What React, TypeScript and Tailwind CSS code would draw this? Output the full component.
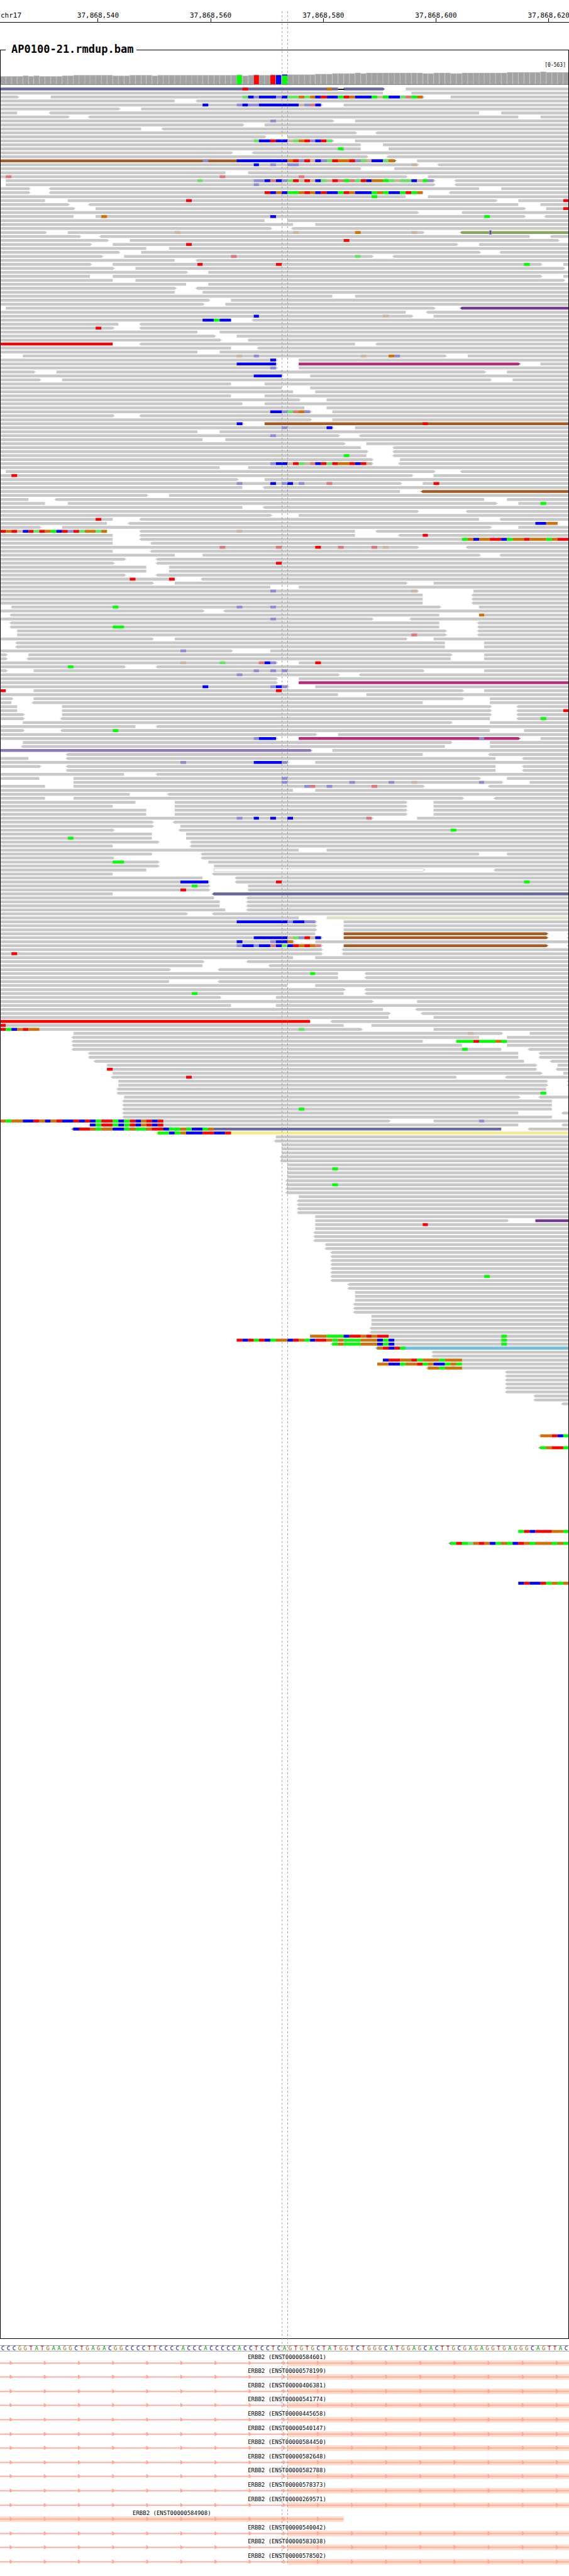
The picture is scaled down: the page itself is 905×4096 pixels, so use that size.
import React from "react";

/* ------------------------------------------------------------------ */
/* Geometry                                                            */
/* ------------------------------------------------------------------ */

const BASES = 101;
const ROW_PITCH = 7;
const READ_HEIGHT = 5;
const FIRST_ROW_Y = 154;

const colX = (col: number) => Math.round((col * 1000) / BASES);

/* ------------------------------------------------------------------ */
/* Palettes                                                            */
/* ------------------------------------------------------------------ */

/* Upper case: confident base call. Lower case: low quality base call. */
const BASE_FILL: Record<string, string> = {
  A: "#00ff00",
  C: "#0000ff",
  G: "#d17105",
  T: "#ff0000",
  a: "#63e563",
  c: "#8d8cda",
  g: "#cbb59d",
  t: "#e07676",
};

const READ_FILL: Record<string, string> = {
  N: "#c8c8c8",
  S: "#666a9c",
  B: "#a65b24",
  O: "#86a762",
  P: "#73398f",
  R: "#ff0000",
  M: "#b92b77",
  V: "#8c79bb",
  L: "#d9e5c0",
  Y: "#f2ec8b",
  K: "#70bde4",
};

/* ------------------------------------------------------------------ */
/* Alignment rows                                                      */
/*   a-b     gap between two reads; ">" or "<" marks a read direction  */
/*   n:ACgt  mismatching bases from column n                           */
/*   @n=K    fill of the n-th read of the row                          */
/*   xN      the row is repeated N times                               */
/*   N|      continue at row N                                         */
/* ------------------------------------------------------------------ */

const ALIGNMENTS = `
68>-72 @0=S 43:T 58:G 60:-
68-73
3>-9 75>-80 43:aCcCCCcCaaGaGCTCCATGCCCAgACCatAG
31-<35
57>-61 36:C 42:cCccCCCCCCCgctC
21>-25
3-<9 85-89
12>-<16 92-96
59>-63 48:c
43>-47
25-<29
63>-<67
47>-51
59>-63 45:aCCTCCgaGTcCTa
64-68
64-69 60:A
41>-<45
65>-<69
70>-74 @0=B 36:c 42:CCCCCCCCCGTcTgCcaTGGTcagCCaG
74>-<78 45:C 48:c 51:cc 73:g
64-70
40-44
72>-76 1:t 39:t 53:t
0-1 77>-<81 35:a 45:ccCtCcaTgTgCagTtAtaTCGGAagaaCgAc
0-1 77>-<81 45:c
5>-<9 85-89
5>-<9 75-<80 47:TCGCAAGTGCTCCATGCCCAGACCATAG
72-76 66:A
8-12 88>-92 33:T 100:T
12>-<16 92-96
13>-17 93>-97 100:T
74>-82
13-17 93>-<97 18:G 48:C 86:A
47-51
52-56
48>-<52
8>-12 75>-<82 @2=O 31:g 52:g 63:G 73:g 87:i
14>-<18 94-<98
19>-23 99>-101 61:T
16>-20 81>-85 33:T
26-30
21>-25 85>-<89
18>-22 66>-<70 41:t 63:a
31-<35
16>-20 96>-100 35:T 49:T 93:A
20>-24 100>-101
33>-37
16-20 96>-100
20-24 100>-101
33-37
31>-<35
31-36
59-63
37>-41
36>-40
0-1 77>-<82 @1=P
72-<76
73>-77 45:C 68:g
41-<45 36:CCACC
21-<25
20>-<25 17:T
35-39
38>-42
39>-44
20-<25 63-<67 @0=R
41-<46
35-39
0>-4 79>-83 42:g 45:c 64:g 69:Gc
49>-53 48:C
49>-53 92>-96 @1=M 42:CCCCCCC
49>-53 48:c
6>-10 86>-90
50>-55 45:CCCCC
7>-11 87>-91
41-47
50-55
52-56
41-47
53>-58
43-47
54-58
55>-59 48:CCcatGc
20>-<25
55>-59
43>-47 @1=B 42:C 75:T
59>-63 50:c 58:C
35-39
60>-<64 48:c
36-40
61>-65
64-<70
65>-<70
65-<70 61:A
66>-71
66>-<71 48:cCCgTagtCTaTGGTCTg
39-44
0-1 77>-<82
73>-77 2:T
42>-47
71>-75 42:c 48:C 50:cC 53:c 58:t 77:T
43-<47
71-<75 @1=B
26>-30
5-<10 86-90
8-12 88>-92 96:A
43-<47
74>-<83
48>-53
20-<25 85-<89 17:T
19-<23 99-101 95:CCGG
7>-11 87>-92
19-<25 63-<67 0:TGTgCTaTGACTcTaGGaG 42:g
20-<25 63-<71 75:T
20-<25 82:AGCGGTTCAGGTGGGAGTT
20-<27
74>-<83 39:t 49:t 56:T 60:t 66:t 68:g
20-<27
31-36 85>-<89
22>-<28
20>-<28 49:T
26-30 x2
22>-<28
31-<36 23:T 30:T
27>-31 72>-77
48-53
74>-84 48:c 73:g
75-<84 x3
0-2 78>-85 20:A 42:c 48:c
36>-<40
0-<2 78-85 85:G
66>-<73 48:c
0-<2 78-<85
0-<2 78-<85 20:AA
0-3 79>-<85
0-3 79>-<85 73:t
27>-31 72>-77
0-<3 79-86 x2
41>-48 32:c
1>-5 80>-86
1>-<5 80-86
49>-53 32:g 39:a 46:tCc 56:T
22>-<28 12:A
1>-6 75>-86 45:c 48:c 50:c
60>-<64 42:c
49>-53
49>-53 @1=M
51>-56 36:C 48:cCc
1-6 82>-86 0:T 49:T
60-65
2>-6 82>-87
2-<6 75-87
3-11 87>-<92
3-11 87>-<92 100:T
4>-11 87>-<92
4>-<11 87-<92 96:A
0-4 80>-87
24-<28
4>-<11 87-93 20:A
56>-60
49>-53 92>-96 @1=M 45:cCCC 85:c
0-4 80>-87
0-<4 79-87
55>-59 @0=V
0-<12 75-<87
5-<12 88-<93
51>-56 32:c 45:CCCCCc
7>-<12 88-<93
0-<12 88-<93
22-<28
7-13 85>-90 50:c
0-13 89>-94 50:c 62:c 69:c 73:g 85:c
8-13 75>-<87 54:ct 58:c 66:t
52-56
23-<30
8-13 82>-<88
24-31 72>-77
20-31 72>-77
26-31 72>-77 x2
66>-74 42:c 45:C 48:C 51:C 65:t
27>-<31
27>-32
20>-<32 80:A
27-33
27-33 12:A
28>-<34
20-<34
53-58
27-<36 85-90
20>-<36
28>-37 20:AA
28>-38
26-38 75>-<88 @1=W
20-<38
36-<42
37>-<42 32:CCCCC 49:T 93:A
37>-44 34:A
37>-44 32:T
20-<38 @1=S
38-<44
39-<44 x2
40-<44
33>-<38
53-58 @1=L
56>-61 42:CCCCCCCCCcCCcc
56>-61 x2
56-61 97>-<101 @1=B
57>-61 97>-<101 @1=B 45:CCCCCCgacTgC
52>-56 42:C 48:cCCG
57>-61 97>-<101 @1=B 42:cCCcCCtCaCTGTGt
57>-<61
57>-<61 2:T
52-56
36>-<44
36-<48
30>-<39
60-<65 55:A
60-<65
30-<39
51-56
61>-<65
61-<65 34:A
39>-49
66>-74
41-49
68-<74
69>-<75
69-77
55-<59 @0=R
61-66 0:T
64>-77 0:TACGTGG 53:a
0-13 89>-94 83:g
0-<13 85-90
0-<13 75-81 81:AAATAAAGA
0-<13 82-90
0-<13 89-<94 82:A
0-<16 92-<96 x2
0-<17 93-<98
0-19 95>-99
0-19 95>-<99 19:T
0-20 96>-100
0-<20 81-<90 33:T
0-21 97>-<101 x2
0-<21 97-101
0-<21 97-101 96:A
0-22 92>-<96
0-<22 98-101 x2
0-<22 98-101 53:A
0-<22 92-<100
0-<22 98-101
69>-77 0:GAGGCCTGCGTCCTCTCATTACATCGTCT 85:c
0-<16 92-<100 16:CATTACATCGTCT
0-<13 89-<94 @0=S 13:CTTGAGGCCAGAAGTTCAAGACCAG
0-<28 @0=Y 28:AACAGCCCTTCCT
0-49
0-<49
0-50 x3
0-<50 x2
0-51
0-51 59:A
0-51 x2
0-<51
0-<51 59:A
0-<51 x2
0-53
0-<53 x4
0-56
0-56 90>-95 @1=P
0-56 75:T
0-56
0-<56 x3
0-<58 x2
0-<59 x6
0-<59 86:A
0-<59
0-<62 x2
0-63 x3
0-<63 x3
0-66 x3
0-<66 x2
0-55 55:GGGAAACTTGTGTT 89:A
0-42 42:TCTATCAGGCTGACTTGAGAAAGGGCAC 89:A
0-<59 59:AGAAAGGGCAC 89:A
0-<67 @0=K 67:GTCTA
0-<77 x2
0-68 68:CTTGGTAGGGAGGG
0-67 67:GGCCAGGTAGCCAGA
0-<76 76:GGAGGG
0-<90 x6
0-<95 x2
0-<100
338| 0-<96 96:GGTCA
341| 0-<96 @0=O 96:AGTTA
362| 0-92 92:ATCTTTGGA
365| 0-<80 @0=V 80:ATAaGTGCAGACTGAGGGAGA
375| 0-92 92:CTCCTAGAG
`;

type Read = { start: number; end: number; left: boolean; right: boolean; fill: string };
type Run = { col: number; length: number; base: string };
type Row = { y: number; reads: Read[]; runs: Run[] };

function parseRows(source: string): Row[] {
  const rows: Row[] = [];
  let index = 0;

  for (const line of source.trim().split("\n")) {
    const reads: Read[] = [];
    const runs: Run[] = [];
    const fills: Record<number, string> = {};
    let repeat = 1;
    let start = 0;
    let left = false;

    const close = (end: number, right: boolean) => {
      if (end > start || left || right) reads.push({ start, end, left, right, fill: "N" });
    };

    for (const token of line.trim().split(/\s+/)) {
      let match: RegExpMatchArray | null;
      if ((match = token.match(/^(\d+)\|$/))) {
        index = Number(match[1]);
      } else if ((match = token.match(/^x(\d+)$/))) {
        repeat = Number(match[1]);
      } else if ((match = token.match(/^@(\d+)=(\w)$/))) {
        fills[Number(match[1])] = match[2];
      } else if ((match = token.match(/^(\d+)(>?)-(<?)(\d+)$/))) {
        close(Number(match[1]), match[2] === ">");
        start = Number(match[4]);
        left = match[3] === "<";
      } else if ((match = token.match(/^(\d+):(\S+)$/))) {
        let col = Number(match[1]);
        for (const group of match[2].match(/(.)\1*/g) ?? []) {
          runs.push({ col, length: group.length, base: group[0] });
          col += group.length;
        }
      }
    }
    close(BASES, false);
    reads.forEach((read, i) => {
      read.fill = fills[i] ?? "N";
    });

    for (let i = 0; i < repeat; i++) {
      rows.push({ y: FIRST_ROW_Y + ROW_PITCH * index, reads, runs });
      index += 1;
    }
  }
  return rows;
}

const ROWS = parseRows(ALIGNMENTS);

function readPath({ start, end, left, right }: Read, y: number) {
  const x1 = colX(start);
  const x2 = colX(end);
  const head = right
    ? `L${x2 + 2} ${y + 1}v1h2v1h-2v1L${x2} ${y + READ_HEIGHT}`
    : `V${y + READ_HEIGHT}`;
  const tail = left ? `H${x1}L${x1 - 2} ${y + 4}v-1h-2v-1h2v-1Z` : `H${x1}Z`;
  return `M${x1} ${y}H${x2}${head}${tail}`;
}

function BaseRun({ run, y }: { run: Run; y: number }) {
  const x = colX(run.col);
  const width = colX(run.col + run.length) - x;
  if (run.base === "-") {
    return (
      <>
        <rect x={x} y={y} width={width} height={READ_HEIGHT} fill="#fff" />
        <rect x={x} y={y + 2} width={width + 1} height={2} fill="#000" />
      </>
    );
  }
  if (run.base === "i") {
    return <path d={`M${x - 1} ${y - 1}h4v1h-1v5h1v1h-4v-1h1v-5h-1z`} fill="#7a1ee0" />;
  }
  return <rect x={x} y={y} width={width} height={READ_HEIGHT} fill={BASE_FILL[run.base]} />;
}

/* ------------------------------------------------------------------ */
/* Coverage histogram: [number of columns, top edge]                   */
/* ------------------------------------------------------------------ */

const COVERAGE_FLOOR = 148;

const COVERAGE: [number, number][] = [
  [4, 134], [1, 133], [1, 134], [1, 133], [4, 134], [2, 133], [7, 132], [3, 133],
  [4, 132], [1, 133], [15, 132], [1, 133], [6, 132], [6, 131], [3, 130], [4, 129],
  [1, 128], [1, 129], [10, 128], [2, 129], [3, 128], [2, 129], [8, 128], [6, 127],
  [1, 126], [4, 127],
];

const VARIANTS: { col: number; top: number; fill: string; minor: string }[] = [
  { col: 42, top: 132, fill: "#00ff00", minor: "#d17105" },
  { col: 45, top: 132, fill: "#ff0000", minor: "#0000ff" },
  { col: 48, top: 132, fill: "#ff0000", minor: "#0000ff" },
  { col: 49, top: 132, fill: "#0000ff", minor: "#ff0000" },
];

function Coverage() {
  const tops = COVERAGE.flatMap(([count, top]) => Array<number>(count).fill(top));
  return (
    <g>
      {tops.map((top, col) => {
        const x = colX(col);
        const width = colX(col + 1) - x;
        return (
          <g key={col}>
            <rect x={x} y={top} width={width} height={COVERAGE_FLOOR - top} fill="#b0b0b0" />
            <rect x={x + 1} y={top + 1} width={width - 2} height={COVERAGE_FLOOR - top - 1} fill="#a2a2a2" />
          </g>
        );
      })}
      {VARIANTS.map(({ col, top, fill, minor }) => (
        <g key={col}>
          <rect x={colX(col)} y={top} width={9} height={COVERAGE_FLOOR - top} fill={fill} />
          <rect x={colX(col) + 4} y={top} width={1} height={1} fill={minor} />
        </g>
      ))}
      <rect x={colX(50) + 1} y={131} width={9} height={2} fill="#0000ff" />
      <rect x={colX(50) + 1} y={133} width={9} height={15} fill="#00ff00" />
      <rect x={0} y={COVERAGE_FLOOR} width={1000} height={1} fill="#707070" />
    </g>
  );
}

/* ------------------------------------------------------------------ */
/* Ruler                                                               */
/* ------------------------------------------------------------------ */

const RULER_MARKS = ["37,868,540", "37,868,560", "37,868,580", "37,868,600", "37,868,620"];

function Ruler() {
  return (
    <header className="flex overflow-hidden border-b border-black pt-[19px] text-[11px] leading-[12px]">
      <span className="w-[7.33%] shrink-0 whitespace-nowrap pl-px">chr17</span>
      {RULER_MARKS.map((mark) => (
        <div key={mark} className="flex w-[19.8%] shrink-0 flex-col items-center">
          <span>{mark}</span>
          <span className="-mt-[2px] h-[6px] w-px bg-black" />
        </div>
      ))}
    </header>
  );
}

/* ------------------------------------------------------------------ */
/* Alignment track                                                     */
/* ------------------------------------------------------------------ */

function AlignmentTrack() {
  return (
    <fieldset className="mt-[32px] min-w-0 border border-black">
      <legend className="ml-[8px] pb-[3px] pl-[9px] pr-[5px] text-[17px] font-bold leading-[20px]">
        AP0100-21.rmdup.bam
      </legend>
      <p className="pb-[6px] pr-1 pt-[9px] text-right text-[8px] leading-[8px]">[0-563]</p>
      <svg
        className="block h-[3604px] w-full"
        viewBox="1 126 998 3982"
        preserveAspectRatio="none"
        role="img"
        aria-label="Read alignments"
      >
        <Coverage />
        {ROWS.map((row) => (
          <g key={row.y}>
            {row.reads.map((read, i) =>
              read.fill === "W" ? (
                <path key={i} d={readPath(read, row.y)} fill="#fff" stroke="#c8c8c8" />
              ) : (
                <path key={i} d={readPath(read, row.y)} fill={READ_FILL[read.fill]} />
              ),
            )}
            {row.runs.map((run) => (
              <BaseRun key={run.col} run={run} y={row.y} />
            ))}
          </g>
        ))}
      </svg>
    </fieldset>
  );
}

/* ------------------------------------------------------------------ */
/* Reference sequence                                                  */
/* ------------------------------------------------------------------ */

const SEQUENCE =
  "CCCGGTATGAAGGCTGAGACGGCCCCTTCCCCACCCACCCCCACCTCCTC" +
  "AGTGTGCTATGGTCTGGGCATGGAGCACTTGCGAGAGGTGAGGGCAGTTAC";

const LETTER_COLOR: Record<string, string> = {
  A: "text-[#009600]",
  C: "text-[#000096]",
  G: "text-[#a5640f]",
  T: "text-[#b40000]",
};

function Sequence() {
  return (
    <div className="mt-[10px] grid grid-cols-[repeat(101,minmax(0,1fr))] border-y border-[#aaaaaa] text-center text-[9px] leading-[8px]">
      {[...SEQUENCE].map((letter, i) => (
        <span key={i} className={LETTER_COLOR[letter]}>
          {letter}
        </span>
      ))}
    </div>
  );
}

/* ------------------------------------------------------------------ */
/* Transcripts                                                         */
/* ------------------------------------------------------------------ */

const TRANSCRIPTS = [
  "ENST00000584601",
  "ENST00000578199",
  "ENST00000406381",
  "ENST00000541774",
  "ENST00000445658",
  "ENST00000540147",
  "ENST00000584450",
  "ENST00000582648",
  "ENST00000582788",
  "ENST00000578373",
  "ENST00000269571",
  "ENST00000584908",
  "ENST00000540042",
  "ENST00000583038",
  "ENST00000578502",
];

const SHORT_TRANSCRIPT = "ENST00000584908";

function Transcript({ id }: { id: string }) {
  const short = id === SHORT_TRANSCRIPT;
  const end = short ? colX(61) : 1000;
  const exonStart = short ? 0 : colX(51);
  const arrows = Array.from({ length: 17 }, (_, i) => 17 + i * 60).filter((x) => x < end);
  return (
    <li className="flex min-h-0 flex-col justify-end">
      <span className={short ? "w-[60.4%] text-center" : "w-full pl-2 text-center"}>ERBB2 ({id})</span>
      <svg className="block h-[9px] w-full" viewBox="0 0 1000 10" preserveAspectRatio="none" aria-hidden="true">
        <rect x={exonStart} y={0} width={end - exonStart} height={10} fill="#ffdccb" />
        <rect x={0} y={4} width={end} height={2} fill="#ffa696" />
        {arrows.map((x) => (
          <path key={x} d={`M${x} 1h1l2 2l1 1v2l-1 1l-2 1h-1z`} fill="#ffa696" />
        ))}
      </svg>
    </li>
  );
}

function Transcripts() {
  return (
    <ul className="grid h-[339px] auto-rows-fr text-[9px] leading-[10px]">
      {TRANSCRIPTS.map((id) => (
        <Transcript key={id} id={id} />
      ))}
    </ul>
  );
}

/* ------------------------------------------------------------------ */
/* Centre guides, drawn over every track                               */
/* ------------------------------------------------------------------ */

function CentreGuides() {
  return (
    <svg
      className="pointer-events-none absolute inset-x-0 top-[18px] h-[4057px] w-full"
      viewBox="0 20 1000 4483"
      preserveAspectRatio="none"
      aria-hidden="true"
    >
      <path d="M495.5 20V4503M505.5 20V4503" stroke="#909090" strokeDasharray="3 4" fill="none" />
    </svg>
  );
}

export default function App() {
  return (
    <main className="relative bg-white pb-[18px] font-['DejaVu_Sans_Mono',monospace] text-black">
      <Ruler />
      <AlignmentTrack />
      <Sequence />
      <Transcripts />
      <CentreGuides />
    </main>
  );
}
